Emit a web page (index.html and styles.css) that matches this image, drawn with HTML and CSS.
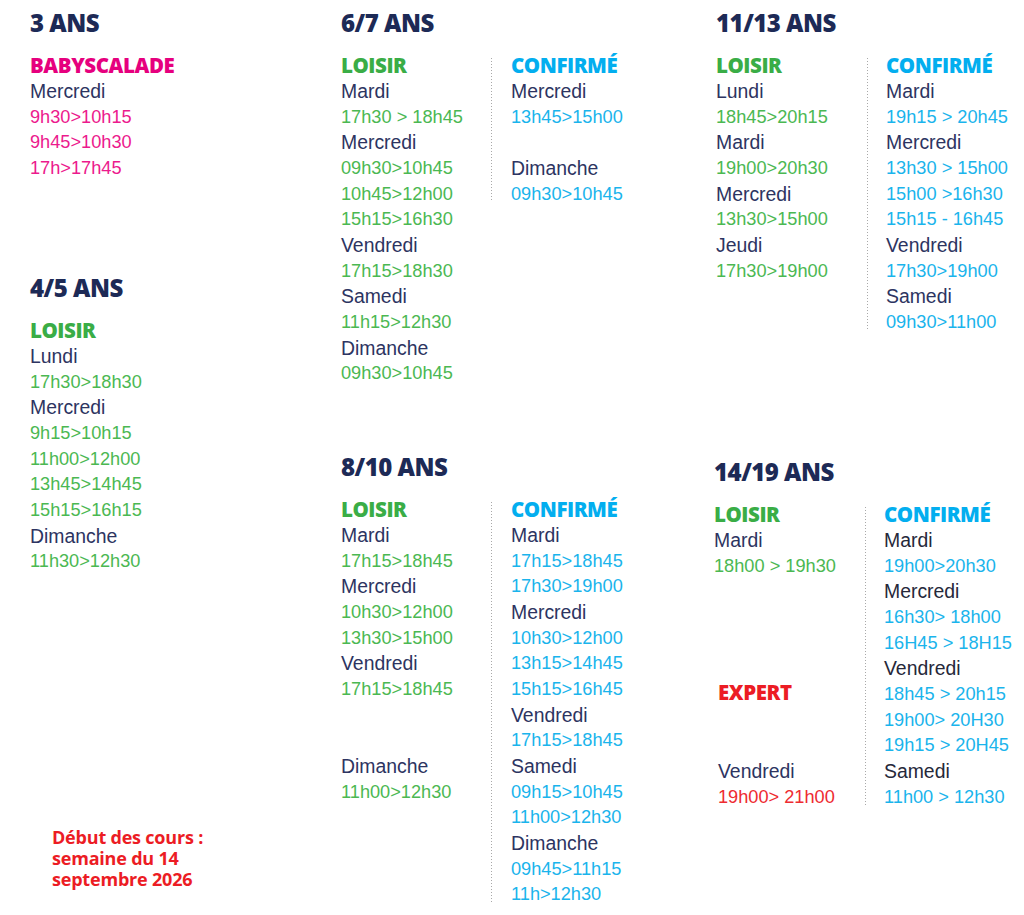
FILE: index.html
```html
<!DOCTYPE html>
<html lang="fr">
<head>
<meta charset="utf-8">
<title>Horaires des cours</title>
<link rel="stylesheet" href="styles.css">
</head>
<body>
<div class="page">
  <div class="col">
    <section class="age">
      <h2 class="age-title">3 ANS</h2>
      <div class="cats">
        <div class="cat">
          <h3 class="cat-title pink">BABYSCALADE</h3>
          <p class="day">Mercredi</p>
          <p class="time pink-t">9h30&gt;10h15</p>
          <p class="time pink-t">9h45&gt;10h30</p>
          <p class="time pink-t">17h&gt;17h45</p>
        </div>
      </div>
    </section>
    <section class="age age-45">
      <h2 class="age-title">4/5 ANS</h2>
      <div class="cats">
        <div class="cat">
          <h3 class="cat-title green">LOISIR</h3>
          <p class="day">Lundi</p>
          <p class="time green-t">17h30&gt;18h30</p>
          <p class="day">Mercredi</p>
          <p class="time green-t">9h15&gt;10h15</p>
          <p class="time green-t">11h00&gt;12h00</p>
          <p class="time green-t">13h45&gt;14h45</p>
          <p class="time green-t">15h15&gt;16h15</p>
          <p class="day">Dimanche</p>
          <p class="time green-t">11h30&gt;12h30</p>
        </div>
      </div>
    </section>
    <div class="note">
      <p class="note-line">Début des cours :</p>
      <p class="note-line">semaine du 14</p>
      <p class="note-line">septembre 2026</p>
    </div>
  </div>

  <div class="col">
    <section class="age">
      <h2 class="age-title">6/7 ANS</h2>
      <div class="cats">
        <div class="cat cat-main">
          <h3 class="cat-title green">LOISIR</h3>
          <p class="day">Mardi</p>
          <p class="time green-t">17h30 &gt; 18h45</p>
          <p class="day">Mercredi</p>
          <p class="time green-t">09h30&gt;10h45</p>
          <p class="time green-t">10h45&gt;12h00</p>
          <p class="time green-t">15h15&gt;16h30</p>
          <p class="day">Vendredi</p>
          <p class="time green-t">17h15&gt;18h30</p>
          <p class="day">Samedi</p>
          <p class="time green-t">11h15&gt;12h30</p>
          <p class="day">Dimanche</p>
          <p class="time green-t">09h30&gt;10h45</p>
        </div>
        <div class="cat cat-conf">
          <h3 class="cat-title blue">CONFIRMÉ</h3>
          <p class="day">Mercredi</p>
          <p class="time blue-t">13h45&gt;15h00</p>
          <div class="gap1"></div>
          <p class="day">Dimanche</p>
          <p class="time blue-t">09h30&gt;10h45</p>
        </div>
      </div>
    </section>
    <section class="age age-810">
      <h2 class="age-title">8/10 ANS</h2>
      <div class="cats">
        <div class="cat cat-main">
          <h3 class="cat-title green">LOISIR</h3>
          <p class="day">Mardi</p>
          <p class="time green-t">17h15&gt;18h45</p>
          <p class="day">Mercredi</p>
          <p class="time green-t">10h30&gt;12h00</p>
          <p class="time green-t">13h30&gt;15h00</p>
          <p class="day">Vendredi</p>
          <p class="time green-t">17h15&gt;18h45</p>
          <div class="gap2"></div>
          <p class="day">Dimanche</p>
          <p class="time green-t">11h00&gt;12h30</p>
        </div>
        <div class="cat cat-conf">
          <h3 class="cat-title blue">CONFIRMÉ</h3>
          <p class="day">Mardi</p>
          <p class="time blue-t">17h15&gt;18h45</p>
          <p class="time blue-t">17h30&gt;19h00</p>
          <p class="day">Mercredi</p>
          <p class="time blue-t">10h30&gt;12h00</p>
          <p class="time blue-t">13h15&gt;14h45</p>
          <p class="time blue-t">15h15&gt;16h45</p>
          <p class="day">Vendredi</p>
          <p class="time blue-t">17h15&gt;18h45</p>
          <p class="day">Samedi</p>
          <p class="time blue-t">09h15&gt;10h45</p>
          <p class="time blue-t">11h00&gt;12h30</p>
          <p class="day">Dimanche</p>
          <p class="time blue-t">09h45&gt;11h15</p>
          <p class="time blue-t">11h&gt;12h30</p>
        </div>
      </div>
    </section>
  </div>

  <div class="col">
    <section class="age">
      <h2 class="age-title">11/13 ANS</h2>
      <div class="cats">
        <div class="cat cat-main wide">
          <h3 class="cat-title green">LOISIR</h3>
          <p class="day">Lundi</p>
          <p class="time green-t">18h45&gt;20h15</p>
          <p class="day">Mardi</p>
          <p class="time green-t">19h00&gt;20h30</p>
          <p class="day">Mercredi</p>
          <p class="time green-t">13h30&gt;15h00</p>
          <p class="day">Jeudi</p>
          <p class="time green-t">17h30&gt;19h00</p>
        </div>
        <div class="cat cat-conf narrow">
          <h3 class="cat-title blue">CONFIRMÉ</h3>
          <p class="day">Mardi</p>
          <p class="time blue-t">19h15 &gt; 20h45</p>
          <p class="day">Mercredi</p>
          <p class="time blue-t">13h30 &gt; 15h00</p>
          <p class="time blue-t">15h00 &gt;16h30</p>
          <p class="time blue-t">15h15 - 16h45</p>
          <p class="day">Vendredi</p>
          <p class="time blue-t">17h30&gt;19h00</p>
          <p class="day">Samedi</p>
          <p class="time blue-t">09h30&gt;11h00</p>
        </div>
      </div>
    </section>
    <section class="age age-1419">
      <h2 class="age-title">14/19 ANS</h2>
      <div class="cats">
        <div class="cat cat-main wide">
          <h3 class="cat-title green">LOISIR</h3>
          <p class="day">Mardi</p>
          <p class="time green-t">18h00 &gt; 19h30</p>
          <div class="expert">
            <h3 class="cat-title red">EXPERT</h3>
            <div class="gap2 plus"></div>
            <p class="day">Vendredi</p>
            <p class="time red-t">19h00&gt; 21h00</p>
          </div>
        </div>
        <div class="cat cat-conf narrow">
          <h3 class="cat-title blue">CONFIRMÉ</h3>
          <p class="day dark">Mardi</p>
          <p class="time blue-t">19h00&gt;20h30</p>
          <p class="day dark">Mercredi</p>
          <p class="time blue-t">16h30&gt; 18h00</p>
          <p class="time blue-t">16H45 &gt; 18H15</p>
          <p class="day dark">Vendredi</p>
          <p class="time blue-t">18h45 &gt; 20h15</p>
          <p class="time blue-t">19h00&gt; 20H30</p>
          <p class="time blue-t">19h15 &gt; 20H45</p>
          <p class="day dark">Samedi</p>
          <p class="time blue-t">11h00 &gt; 12h30</p>
        </div>
      </div>
    </section>
  </div>
</div>
</body>
</html>
```

FILE: styles.css
```css
html, body {
  margin: 0;
  padding: 0;
  background: #ffffff;
}

body {
  font-family: "Liberation Sans", Arial, sans-serif;
  width: 1024px;
  height: 915px;
  overflow: hidden;
}

.page {
  display: grid;
  grid-template-columns: 311px 375px 1fr;
  padding: 8px 0 0 30px;
}

.col {
  display: flex;
  flex-direction: column;
}

.age-title {
  margin: 0 0 15.3px;
  font-family: "Open Sans", "Noto Sans", sans-serif;
  font-weight: 800;
  font-size: 24px;
  line-height: 30px;
  color: #1d2a56;
  letter-spacing: -0.5px;
}

.age-45 { margin-top: 91.4px; }
.age-810 { margin-top: 65.3px; }
.age-1419 { margin-top: 121.5px; margin-left: -2px; }

.cats {
  display: flex;
  align-items: flex-start;
}

.cat-main { width: 150px; }
.cat-main.wide { width: 151px; }

.cat-conf {
  position: relative;
  padding-left: 20px;
}
.cat-conf.narrow { padding-left: 19px; }

.cat-conf::before {
  content: "";
  position: absolute;
  left: 0;
  top: 5px;
  bottom: 5px;
  width: 1px;
  background: repeating-linear-gradient(to bottom, #a9a9a9 0 1px, transparent 1px 3px);
}

.cat-title {
  margin: 0;
  font-family: "Open Sans", "Noto Sans", sans-serif;
  font-weight: 800;
  font-size: 20.5px;
  line-height: 25.65px;
  letter-spacing: -0.45px;
}

.day, .time {
  margin: 0;
  line-height: 25.65px;
  white-space: nowrap;
}

.day {
  font-size: 19.4px;
  color: #2d3461;
}
.day.dark { color: #26283a; }

.time { font-size: 18.2px; }

.pink { color: #e6007e; }
.pink-t { color: #ec1a8d; }
.green { color: #3aad46; }
.green-t { color: #4bb852; }
.blue { color: #03aeef; }
.blue-t { color: #1ab4ec; }
.red { color: #ec1c24; }
.red-t { color: #ee2b31; }

.gap1 { height: 25.65px; }
.gap2 { height: 51.3px; }
.gap2.plus { height: 53px; }

.expert {
  margin-top: 101px;
  padding-left: 4px;
}

.note {
  margin: 252px 0 0 22px;
  font-family: "Open Sans", "Noto Sans", sans-serif;
  font-weight: 700;
  font-size: 18px;
  color: #ec1c24;
  letter-spacing: -0.2px;
}

.note-line {
  margin: 0;
  height: 21px;
  line-height: 21px;
  white-space: nowrap;
}
```
